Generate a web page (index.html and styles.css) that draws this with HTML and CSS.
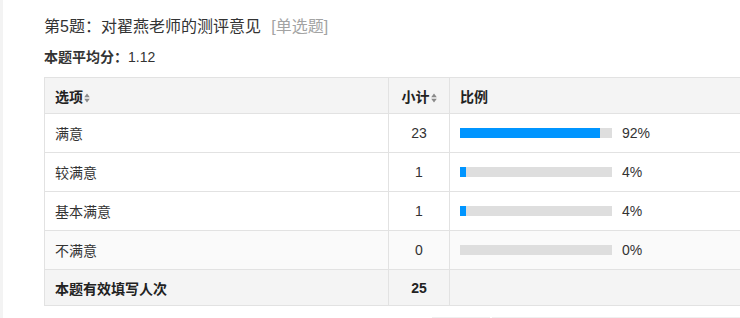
FILE: index.html
```html
<!DOCTYPE html>
<html lang="zh-CN">
<head>
<meta charset="utf-8">
<title>第5题</title>
<link rel="stylesheet" href="styles.css">
</head>
<body>
<div class="page">
  <div class="title">第5题：对翟燕老师的测评意见 <span class="qtype">[单选题]</span></div>
  <div class="avg"><b>本题平均分：</b>1.12</div>
  <table class="stat">
    <colgroup>
      <col class="c-opt"><col class="c-cnt"><col class="c-pct">
    </colgroup>
    <thead>
      <tr>
        <th class="opt">选项<svg class="sort" width="6" height="10" viewBox="0 0 6 10"><path d="M3 0.5L5.8 4.2H0.2Z M3 9.5L5.8 5.8H0.2Z" fill="#8a8a8a"/></svg></th>
        <th class="cnt">小计<svg class="sort" width="6" height="10" viewBox="0 0 6 10"><path d="M3 0.5L5.8 4.2H0.2Z M3 9.5L5.8 5.8H0.2Z" fill="#8a8a8a"/></svg></th>
        <th class="pct">比例</th>
      </tr>
    </thead>
    <tbody>
      <tr>
        <td>满意</td><td class="num">23</td>
        <td><div class="ratio"><div class="bar"><div class="fill" style="width:92%"></div></div><span>92%</span></div></td>
      </tr>
      <tr>
        <td>较满意</td><td class="num">1</td>
        <td><div class="ratio"><div class="bar"><div class="fill" style="width:4%"></div></div><span>4%</span></div></td>
      </tr>
      <tr>
        <td>基本满意</td><td class="num">1</td>
        <td><div class="ratio"><div class="bar"><div class="fill" style="width:4%"></div></div><span>4%</span></div></td>
      </tr>
      <tr class="alt">
        <td>不满意</td><td class="num">0</td>
        <td><div class="ratio"><div class="bar"><div class="fill" style="width:0%"></div></div><span>0%</span></div></td>
      </tr>
      <tr class="total">
        <td><b>本题有效填写人次</b></td><td class="num"><b>25</b></td><td></td>
      </tr>
    </tbody>
  </table>
  <div class="footer">
    <div class="fbox small"></div>
    <div class="fbox wide"></div>
  </div>
</div>
</body>
</html>
```

FILE: styles.css
```css
html, body {
  margin: 0;
  padding: 0;
  background: #fff;
  overflow: hidden;
}
body {
  font-family: "Liberation Sans", "Noto Sans CJK SC", sans-serif;
  color: #333;
  font-size: 14px;
}
.page {
  border-left: 3px solid #f3f3f3;
  padding-left: 41px;
  padding-top: 16px;
  min-height: 318px;
  box-sizing: border-box;
  width: 760px;
}
.title {
  font-size: 16px;
  line-height: 22px;
  color: #333;
}
.qtype {
  color: #a3a3a3;
  margin-left: 6px;
}
.avg {
  margin-top: 9px;
  line-height: 20px;
  font-size: 14px;
}
.avg b {
  font-weight: bold;
}
.stat {
  margin-top: 10px;
  border-collapse: collapse;
  width: 716px;
  table-layout: fixed;
  border: 1px solid #e2e2e2;
}
.c-opt { width: 344px; }
.c-cnt { width: 61px; }
.stat th, .stat td {
  border: 1px solid #e2e2e2;
  padding: 0 10px;
  text-align: left;
  font-size: 14px;
  vertical-align: middle;
}
.stat thead tr {
  height: 36px;
  background: #f4f4f4;
}
.stat th {
  font-weight: bold;
  color: #222;
}
.stat th.cnt { text-align: center; }
.sort {
  margin-left: 1px;
  vertical-align: -1px;
}
.stat tbody tr {
  height: 39px;
}
.stat tbody tr.alt { background: #fafafa; }
.stat tbody tr.total { background: #f4f4f4; height: 36px; }
.total b { color: #222; }
.stat td.num { text-align: center; }
.ratio {
  display: flex;
  align-items: center;
  gap: 10px;
}
.bar {
  width: 152px;
  height: 10px;
  background: #dedede;
}
.fill {
  height: 100%;
  background: #0095ff;
}
.footer {
  display: flex;
  gap: 2px;
  margin-top: 11px;
  padding-left: 388px;
}
.fbox {
  height: 12px;
  background: #efefef;
}
.fbox.small { width: 58px; }
.fbox.wide { width: 260px; }
```
